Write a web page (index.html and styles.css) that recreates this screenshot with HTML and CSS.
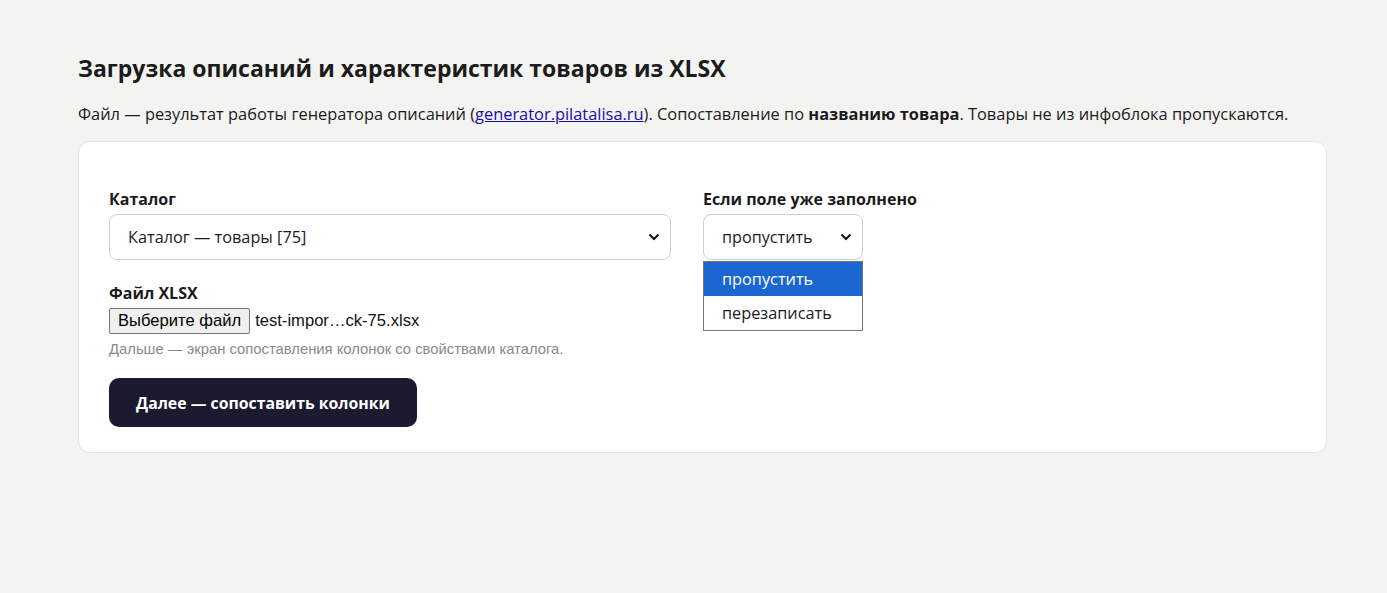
FILE: index.html
```html
<!DOCTYPE html>
<html lang="ru">
<head>
    <meta charset="UTF-8">
    <meta name="viewport" content="width=device-width, initial-scale=1.0">
    <title>Импорт описаний из XLSX</title>
    <link rel="stylesheet" href="styles.css">
</head>
<body>
    <main class="page">
        <h1>Загрузка описаний и характеристик товаров из XLSX</h1>
        <p class="lead">Файл — результат работы генератора описаний (<a href="#">generator.pilatalisa.ru</a>). Сопоставление по <strong>названию товара</strong>. Товары не из инфоблока пропускаются.</p>

        <!-- форма загрузки -->
        <form class="card">
            <div class="form-grid">
                <div class="field">
                    <label class="field-label">Каталог</label>
                    <div class="select wide">
                        <span>Каталог — товары [75]</span>
                        <svg class="chevron" viewBox="0 0 12 8" width="12" height="8"><path d="M1.5 1.5 6 6l4.5-4.5" fill="none" stroke="#111" stroke-width="2"/></svg>
                    </div>
                </div>
                <div class="field">
                    <label class="field-label">Если поле уже заполнено</label>
                    <div class="select-wrap">
                        <div class="select short">
                            <span>пропустить</span>
                            <svg class="chevron" viewBox="0 0 12 8" width="12" height="8"><path d="M1.5 1.5 6 6l4.5-4.5" fill="none" stroke="#111" stroke-width="2"/></svg>
                        </div>
                        <ul class="options">
                            <li class="selected">пропустить</li>
                            <li>перезаписать</li>
                        </ul>
                    </div>
                </div>
                <div class="field">
                    <label class="field-label">Файл XLSX</label>
                    <div class="file-input">
                        <span class="file-btn">Выберите файл</span>
                        <span class="file-name">test-impor…ck-75.xlsx</span>
                    </div>
                    <p class="hint">Дальше — экран сопоставления колонок со свойствами каталога.</p>
                </div>
            </div>
            <button type="button" class="btn">Далее — сопоставить колонки</button>
        </form>
    </main>
</body>
</html>
```

FILE: styles.css
```css
* {
    margin: 0;
    padding: 0;
    box-sizing: border-box;
}

body {
    background-color: #f3f3f1;
    font-family: 'Open Sans', 'Noto Sans', sans-serif;
    color: #1b1b1b;
}

.page {
    padding: 52px 60px 0 78px;
}

.page h1 {
    font-size: 23px;
    font-weight: 700;
    line-height: 32px;
}

.lead {
    font-size: 16.4px;
    line-height: 24px;
    margin-top: 18px;
}

.lead a {
    color: #1a0dab;
}

.card {
    margin-top: 15px;
    width: 1249px;
    background-color: #fff;
    border: 1px solid #e4e4e0;
    border-radius: 12px;
    padding: 46px 30px 25px;
}

.form-grid {
    display: grid;
    grid-template-columns: 562px 1fr;
    column-gap: 32px;
    row-gap: 22px;
}

.field-label {
    display: block;
    font-size: 16px;
    font-weight: 700;
    line-height: 22px;
    margin-bottom: 4px;
}

.select {
    display: flex;
    align-items: center;
    justify-content: space-between;
    height: 46px;
    border: 1px solid #cfcfcf;
    border-radius: 8px;
    padding: 0 10px 0 18px;
    font-size: 16.3px;
    background-color: #fff;
}

.select.short {
    width: 160px;
    font-size: 16.2px;
}

.select-wrap {
    position: relative;
    width: 160px;
}

.options {
    position: absolute;
    top: 47px;
    left: 0;
    width: 160px;
    list-style: none;
    background-color: #fff;
    border: 1px solid #767676;
    font-size: 16.3px;
    z-index: 10;
}

.options li {
    height: 34px;
    line-height: 34px;
    padding-left: 18px;
}

.options li.selected {
    background-color: #1a67d2;
    color: #fff;
}

.file-input {
    display: flex;
    align-items: center;
    gap: 5px;
    font-family: 'Liberation Sans', Arial, sans-serif;
    font-size: 16.6px;
}

.file-btn {
    display: inline-block;
    padding: 2px 8px;
    background-color: #efefef;
    border: 1px solid #767676;
    border-radius: 2px;
    color: #000;
}

.file-name {
    color: #111;
}

.hint {
    font-family: 'Liberation Sans', Arial, sans-serif;
    font-size: 14.8px;
    color: #8a8a8a;
    margin-top: 7px;
}

.btn {
    margin-top: 21px;
    width: 308px;
    height: 49px;
    background-color: #1c1a2e;
    color: #fff;
    border: none;
    border-radius: 10px;
    font-family: 'Open Sans', 'Noto Sans', sans-serif;
    font-size: 15.8px;
    font-weight: 700;
    cursor: pointer;
}
```
